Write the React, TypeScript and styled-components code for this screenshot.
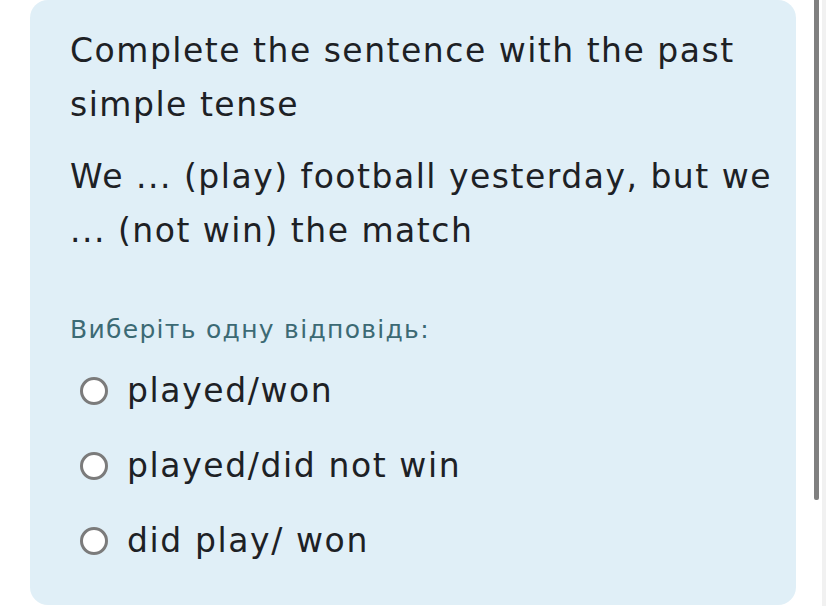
import styled, { createGlobalStyle } from "styled-components";

const GlobalStyle = createGlobalStyle`
  html, body {
    margin: 0;
    padding: 0;
    background: #ffffff;
  }
  body {
    font-family: "DejaVu Sans", "Noto Sans", sans-serif;
    overflow: hidden;
  }
`;

const Page = styled.div`
  display: flex;
  width: 826px;
  height: 606px;
  padding-left: 30px;
  box-sizing: border-box;
`;

const Card = styled.div`
  width: 766px;
  height: 605px;
  box-sizing: border-box;
  background: #e0eff7;
  border-radius: 18px;
  padding: 24px 12px 0 40px;
  color: #1d2125;
`;

const Heading = styled.p`
  margin: 0;
  font-size: 33px;
  letter-spacing: 1.5px;
  line-height: 54px;
`;

const Question = styled.p`
  margin: 18px 0 0 0;
  font-size: 33px;
  letter-spacing: 1.5px;
  line-height: 54px;
`;

const Prompt = styled.div`
  margin-top: 56px;
  font-size: 25px;
  letter-spacing: 1.3px;
  line-height: 32px;
  color: #3c6a74;
`;

const Options = styled.div`
  display: flex;
  flex-direction: column;
  gap: 21px;
  margin-top: 18px;
`;

const Option = styled.label`
  display: flex;
  align-items: center;
  gap: 19px;
  font-size: 33px;
  letter-spacing: 1.6px;
  line-height: 54px;
  padding-left: 10px;
`;

const Radio = styled.span`
  width: 28px;
  height: 28px;
  box-sizing: border-box;
  border-radius: 50%;
  border: 3px solid #7b7b7b;
  background: #ffffff;
  flex-shrink: 0;
`;

const Track = styled.div`
  margin-left: 18px;
  width: 12px;
  height: 606px;
  display: flex;
  background: linear-gradient(to right, #ffffff 0 8px, #f1f1f1 8px);
`;

const Thumb = styled.div`
  width: 5px;
  height: 500px;
  background: #808080;
  border-radius: 0 0 2px 2px;
`;

const options = ["played/won", "played/did not win", "did play/ won"];

export default function App() {
  return (
    <>
      <GlobalStyle />
      <Page>
        <Card>
          <Heading>Complete the sentence with the past simple tense</Heading>
          <Question>We ... (play) football yesterday, but we ... (not win) the match</Question>
          <Prompt>Виберіть одну відповідь:</Prompt>
          <Options>
            {options.map((o) => (
              <Option key={o}>
                <Radio />
                {o}
              </Option>
            ))}
          </Options>
        </Card>
        <Track>
          <Thumb />
        </Track>
      </Page>
    </>
  );
}
